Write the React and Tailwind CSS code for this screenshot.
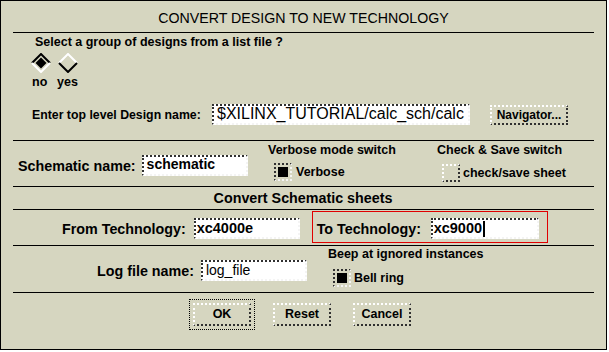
import React from 'react';

const sunken = 'border-2 border-dotted border-t-[#303030] border-l-[#303030] border-r-[#f4f4f4] border-b-[#f4f4f4]';
const raised = 'border-2 border-dotted border-t-white border-l-white border-r-[#303030] border-b-[#303030]';

function Field({ width, className = '', children }) {
    return (
        <div className={`${sunken} bg-white h-[21px] shrink-0 flex items-start pt-[1px] whitespace-nowrap overflow-hidden ${width} ${className}`}>
            {children}
        </div>
    );
}

function Check({ on }) {
    return (
        <div className={`w-[18px] h-[18px] shrink-0 flex items-center justify-center ${on ? sunken : raised}`}>
            {on && <div className="w-[10px] h-[10px] bg-black" />}
        </div>
    );
}

function Diamond({ on }) {
    const top = on ? '#000' : '#fff';
    const bottom = on ? '#fff' : '#000';
    return (
        <svg width="20" height="20" viewBox="0 0 20 20" className="block">
            <polyline points="1,10 10,1 19,10" fill="none" stroke={top} strokeWidth="2" />
            <polyline points="1,10 10,19 19,10" fill="none" stroke={bottom} strokeWidth="2" />
            {on && <polygon points="10,4.5 15.5,10 10,15.5 4.5,10" fill="#000" />}
        </svg>
    );
}

function Button({ children, focus }) {
    return (
        <div
            className={`w-[58px] h-[23px] ${raised} flex items-center justify-center text-[12.5px] font-bold leading-none ${
                focus ? 'outline-1 outline-dotted outline-black outline-offset-[3px]' : ''
            }`}
        >
            {children}
        </div>
    );
}

const Rule = () => <div className="mx-[12px] h-px bg-black shrink-0" />;

export default function App() {
    return (
        <div className="w-[609px] h-[352px] bg-white font-['Liberation_Sans',Arial,sans-serif] text-black">
            <div className="w-[607px] h-[350px] border border-black bg-[#d6d6c0] flex flex-col">
                {/* title */}
                <div className="h-[31px] pt-[9px] text-center text-[14.2px] leading-[16px] shrink-0">
                    CONVERT DESIGN TO NEW TECHNOLOGY
                </div>
                <Rule />

                {/* design list / top level name */}
                <div className="h-[107px] shrink-0 flex flex-col">
                    <div className="pl-[34px] pt-[2px] text-[12.5px] font-bold leading-[14px]">
                        Select a group of designs from a list file ?
                    </div>
                    <div className="flex pl-[30px] mt-[4px] gap-[6px]">
                        <div className="flex flex-col items-start">
                            <Diamond on />
                            <span className="mt-[2px] text-[12.5px] font-bold leading-[14px] pl-[1px]">no</span>
                        </div>
                        <div className="flex flex-col items-start">
                            <div className="pl-[1px]"><Diamond /></div>
                            <span className="mt-[2px] text-[12.5px] font-bold leading-[14px]">yes</span>
                        </div>
                    </div>
                    <div className="flex items-center pl-[31px] mt-[15px]">
                        <span className="w-[180px] text-[12.3px] font-bold leading-[14px] whitespace-nowrap">
                            Enter top level Design name:
                        </span>
                        <Field width="w-[258px]" className="pl-[3px]">
                            <span className="text-[16px] leading-[14px]">$XILINX_TUTORIAL/calc_sch/calc</span>
                        </Field>
                        <div className={`ml-[20px] w-[78px] h-[20px] ${raised} flex items-center justify-center text-[12px] font-bold leading-none`}>
                            Navigator...
                        </div>
                    </div>
                </div>
                <Rule />

                {/* schematic name + switches */}
                <div className="h-[45px] shrink-0 flex items-start">
                    <div className="w-[267px] pl-[17px] mt-[14px] flex items-center">
                        <span className="text-[14.3px] font-bold leading-[16px] whitespace-nowrap">Schematic name:</span>
                        <Field width="w-[106px]" className="ml-[6px] pl-[3px]">
                            <span className="text-[14px] font-bold leading-[13px]">schematic</span>
                        </Field>
                    </div>
                    <div className="w-[169px] pt-[2px] flex flex-col">
                        <span className="text-[12.5px] font-bold leading-[14px] whitespace-nowrap">Verbose mode switch</span>
                        <div className="flex items-center mt-[6px] ml-[6px] gap-[4px]">
                            <Check on />
                            <span className="text-[12.5px] font-bold leading-[14px]">Verbose</span>
                        </div>
                    </div>
                    <div className="pt-[2px] flex flex-col">
                        <span className="text-[12.5px] font-bold leading-[14px] whitespace-nowrap">Check &amp; Save switch</span>
                        <div className="flex items-center mt-[7px] ml-[5px] gap-[3px]">
                            <Check />
                            <span className="text-[12.5px] font-bold leading-[14px] whitespace-nowrap">check/save sheet</span>
                        </div>
                    </div>
                </div>
                <Rule />

                <div className="h-[22px] shrink-0 text-center text-[14.3px] font-bold leading-[22px] pr-[1px]">
                    Convert Schematic sheets
                </div>
                <Rule />

                {/* technologies */}
                <div className="h-[35px] shrink-0 flex items-start">
                    <div className="pl-[61px] mt-[8px] flex items-center">
                        <span className="text-[14.3px] font-bold leading-[16px] whitespace-nowrap">From Technology:</span>
                        <Field width="w-[106px]" className="ml-[8px] pl-[1px]">
                            <span className="text-[14.5px] font-bold leading-[14px]">xc4000e</span>
                        </Field>
                    </div>
                    <div className="ml-[12px] mt-[1px] w-[236px] h-[32px] border border-[#e00000] flex items-center pt-[3px] pl-[4px] pr-[8px]">
                        <span className="text-[14.3px] font-bold leading-[16px] whitespace-nowrap">To Technology:</span>
                        <Field width="w-[108px]" className="ml-auto pl-[1px]">
                            <span className="text-[14.5px] font-bold leading-[14px]">xc9000</span>
                            <span className="w-[2px] h-[16px] bg-black ml-[1px]" />
                        </Field>
                    </div>
                </div>
                <Rule />

                {/* log file */}
                <div className="h-[46px] shrink-0 flex items-start">
                    <div className="pl-[96px] mt-[14px] flex items-center">
                        <span className="text-[14.3px] font-bold leading-[16px] whitespace-nowrap">Log file name:</span>
                        <Field width="w-[106px]" className="ml-[7px] pl-[3px]">
                            <span className="text-[14px] leading-[14px]">log_file</span>
                        </Field>
                    </div>
                    <div className="ml-[21px] pt-[1px] flex flex-col">
                        <span className="text-[12.5px] font-bold leading-[14px] whitespace-nowrap">Beep at ignored instances</span>
                        <div className="flex items-center mt-[8px] ml-[5px] gap-[3px]">
                            <Check on />
                            <span className="text-[12.5px] font-bold leading-[14px]">Bell ring</span>
                        </div>
                    </div>
                </div>
                <Rule />

                {/* buttons */}
                <div className="flex-1 flex items-start pt-[10px] pl-[192px] gap-[22px]">
                    <Button focus>OK</Button>
                    <Button>Reset</Button>
                    <Button>Cancel</Button>
                </div>
            </div>
        </div>
    );
}
